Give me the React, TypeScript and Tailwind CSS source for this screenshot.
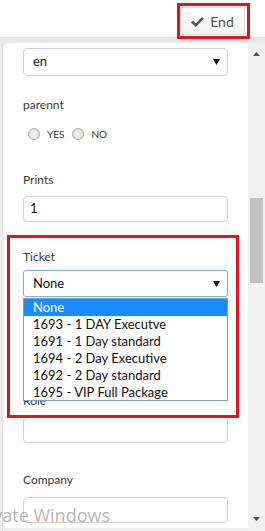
import React, { FC } from "react";

const Caret: FC = () => (
  <svg width="7" height="6" viewBox="0 0 7 6" className="absolute right-[7px] top-1/2 -translate-y-1/2">
    <polygon points="0,0 7,0 3.5,6" fill="#111" />
  </svg>
);

const Label: FC<{ text: string; className?: string }> = ({ text, className }) => (
  <div className={"text-[12px] leading-[16px] text-[#3a3a3a] " + (className ?? "")}>{text}</div>
);

const Radio: FC<{ label: string }> = ({ label }) => (
  <label className="flex items-center gap-[7px]">
    <span className="w-[12px] h-[12px] rounded-full border border-[#b0b0b0] bg-radial from-[#f7f7f7] to-[#d6d6d6]" />
    <span className="text-[10px] leading-[12px] text-[#333]">{label}</span>
  </label>
);

const options = [
  "None",
  "1693 - 1 DAY Executve",
  "1691 - 1 Day standard",
  "1694 - 2 Day Executive",
  "1692 - 2 Day standard",
  "1695 - VIP Full Package",
];

const App: FC = () => {
  return (
    <div className="w-[265px] h-[531px] bg-[#eeeeee] relative overflow-hidden font-['Lato',sans-serif]">
      {/* Top bar */}
      <div className="h-[38px] bg-white border-b border-[#e2e2e2] flex justify-end items-start pt-[3px] pr-[15px] shadow-[0_2px_4px_rgba(0,0,0,0.06)]">
        <div className="border-[3px] border-[#e3141f] pt-px pb-px pr-[2px]">
          <button className="w-[65px] h-[28px] rounded-[3px] border border-[#dcdcdc] bg-linear-to-b from-white to-[#f3f3f3] flex items-center justify-center gap-[6px] text-[14px] text-[#555]">
            <svg width="13" height="11" viewBox="0 0 13 11">
              <path d="M1 5.5 L4.8 9.2 L12 1.8" stroke="#555" strokeWidth="2.6" fill="none" />
            </svg>
            <span>End</span>
          </button>
        </div>
      </div>

      <div className="flex mt-[5px] h-[488px]">
        <div className="w-[3px] border-r border-[#e0e0e0]" />
        {/* Form panel */}
        <div className="relative flex-1 h-[485px] bg-white rounded-l-[6px] px-[20px] pt-[5px] flex flex-col">
          <div className="relative h-[28px] border border-[#cfcfcf] rounded-[4px] flex items-center pl-[9px] text-[13px] text-[#111]">
            en
            <Caret />
          </div>

          <Label text="parennt" className="mt-[21px]" />
          <div className="mt-[15px] h-[12px] flex items-center gap-[8px] pl-[5px]">
            <Radio label="YES" />
            <Radio label="NO" />
          </div>

          <Label text="Prints" className="mt-[32px]" />
          <div className="mt-[8px] h-[26px] border border-[#d2d2d2] rounded-[4px] flex items-center pl-[6px] text-[13px] text-[#111]">
            1
          </div>

          <Label text="Ticket" className="mt-[27px]" />
          <div className="relative mt-[5px] h-[27px] border border-[#7fb4e6] rounded-[3px] shadow-[0_0_2px_rgba(102,175,233,0.5)] flex items-center pl-[9px] text-[13px] text-[#111]">
            None
            <Caret />
          </div>

          <Label text="Role" className="mt-[96px]" />
          <div className="mt-[8px] h-[26px] border border-[#d2d2d2] rounded-[4px]" />

          <Label text="Company" className="mt-[29px]" />
          <div className="mt-[9px] h-[26px] border border-[#d2d2d2] rounded-[4px]" />

          {/* open dropdown list */}
          <div className="absolute left-[20px] top-[255px] w-[205px] h-[103px] bg-white border border-[#7a9fcf] flex flex-col">
            {options.map((o, i) => (
              <div
                key={o}
                className={
                  "h-[17px] leading-[17px] pl-[9px] text-[13px] whitespace-nowrap " +
                  (i === 0 ? "bg-[#1a8cff] text-white" : "text-[#111]")
                }
              >
                {o}
              </div>
            ))}
          </div>

          {/* annotation box */}
          <div className="absolute left-[4px] top-[192px] w-[232px] h-[183px] border-[3px] border-[#e3141f] pointer-events-none" />
        </div>

        {/* Scrollbar */}
        <div className="relative w-[17px] h-[488px] bg-[#f1f1f1]">
          <svg width="7" height="4" viewBox="0 0 7 4" className="absolute left-[5px] top-[9px]">
            <polygon points="0,4 7,4 3.5,0" fill="#505050" />
          </svg>
          <div className="absolute left-[2px] top-[155px] w-[13px] h-[85px] bg-[#c1c1c1]" />
          <svg width="7" height="4" viewBox="0 0 7 4" className="absolute left-[5px] bottom-[10px]">
            <polygon points="0,0 7,0 3.5,4" fill="#505050" />
          </svg>
        </div>
      </div>

      {/* Windows watermark */}
      <div className="absolute right-[155px] top-[503px] whitespace-nowrap text-[18px] leading-[24px] text-[rgba(120,120,120,0.55)] font-['Open_Sans',sans-serif]">
        Activate Windows
      </div>
    </div>
  );
};

export default App;
